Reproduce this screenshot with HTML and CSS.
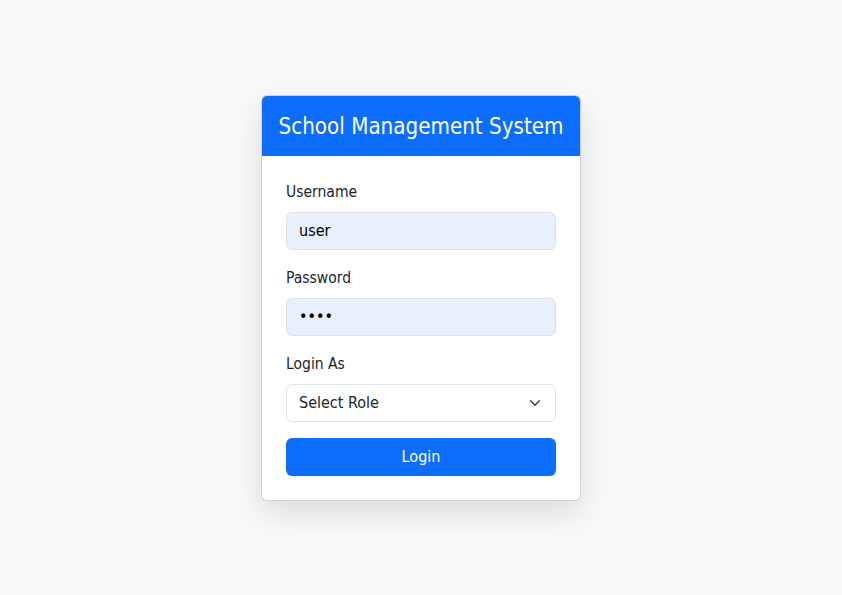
FILE: index.html
```html
<!DOCTYPE html>
<html lang="en">
<head>
<meta charset="utf-8">
<title>School Management System</title>
<link rel="stylesheet" href="styles.css">
</head>
<body>
<main class="page">
  <section class="card">
    <header class="card-header">
      <h3 class="title">School Management System</h3>
    </header>
    <form class="card-body">
      <div class="field">
        <label class="label" for="username">Username</label>
        <input class="control autofill" id="username" type="text" value="user">
      </div>
      <div class="field">
        <label class="label" for="password">Password</label>
        <input class="control autofill" id="password" type="password" value="user">
      </div>
      <div class="field">
        <label class="label" for="role">Login As</label>
        <div class="select">
          <span class="select-text">Select Role</span>
          <svg class="chevron" viewBox="0 0 16 16" width="16" height="16"><path d="M2 5l6 6 6-6" fill="none" stroke="#343a40" stroke-width="1.8" stroke-linecap="round" stroke-linejoin="round"/></svg>
        </div>
      </div>
      <button class="btn" type="button">Login</button>
    </form>
  </section>
</main>
</body>
</html>
```
FILE: styles.css
```css
* { box-sizing: border-box; }
html, body { margin: 0; padding: 0; }
body {
  background: #f8f9fa;
  font-family: "DejaVu Sans Condensed", "DejaVu Sans", sans-serif;
  color: #212529;
  font-size: 16px;
  line-height: 1.5;
}
.page {
  min-height: 595px;
  display: flex;
  align-items: center;
  justify-content: center;
}
.card {
  width: 320px;
  background: #fff;
  border: 1px solid rgba(0,0,0,0.175);
  border-radius: 6px;
  box-shadow: 0 12px 32px rgba(0,0,0,0.12);
  overflow: hidden;
}
.card-header {
  background: #0d6efd;
  color: #fff;
  text-align: center;
  padding: 16px 4px;
  white-space: nowrap;
}
.title {
  margin: 0;
  font-size: 22.2px;
  font-weight: 400;
  line-height: 28px;
}
.card-body {
  padding: 24px;
  display: flex;
  flex-direction: column;
}
.field { margin-bottom: 16px; display: flex; flex-direction: column; }
.label { margin-bottom: 8px; font-size: 15.5px; line-height: 24px; }
.control {
  height: 38px;
  border: 1px solid #dee2e6;
  border-radius: 6px;
  padding: 6px 12px;
  font: inherit;
  font-size: 16px;
  color: #000;
}
.autofill { background: #e8f0fe; }
.select {
  height: 38px;
  border: 1px solid #dee2e6;
  border-radius: 6px;
  padding: 6px 12px;
  display: flex;
  align-items: center;
  justify-content: space-between;
  background: #fff;
}
.select-text { font-size: 16px; }
.chevron { width: 12px; height: 12px; margin-right: 2px; }
.btn {
  height: 38px;
  border: none;
  border-radius: 6px;
  background: #0d6efd;
  color: #fff;
  font: inherit;
  font-size: 16px;
}
```
